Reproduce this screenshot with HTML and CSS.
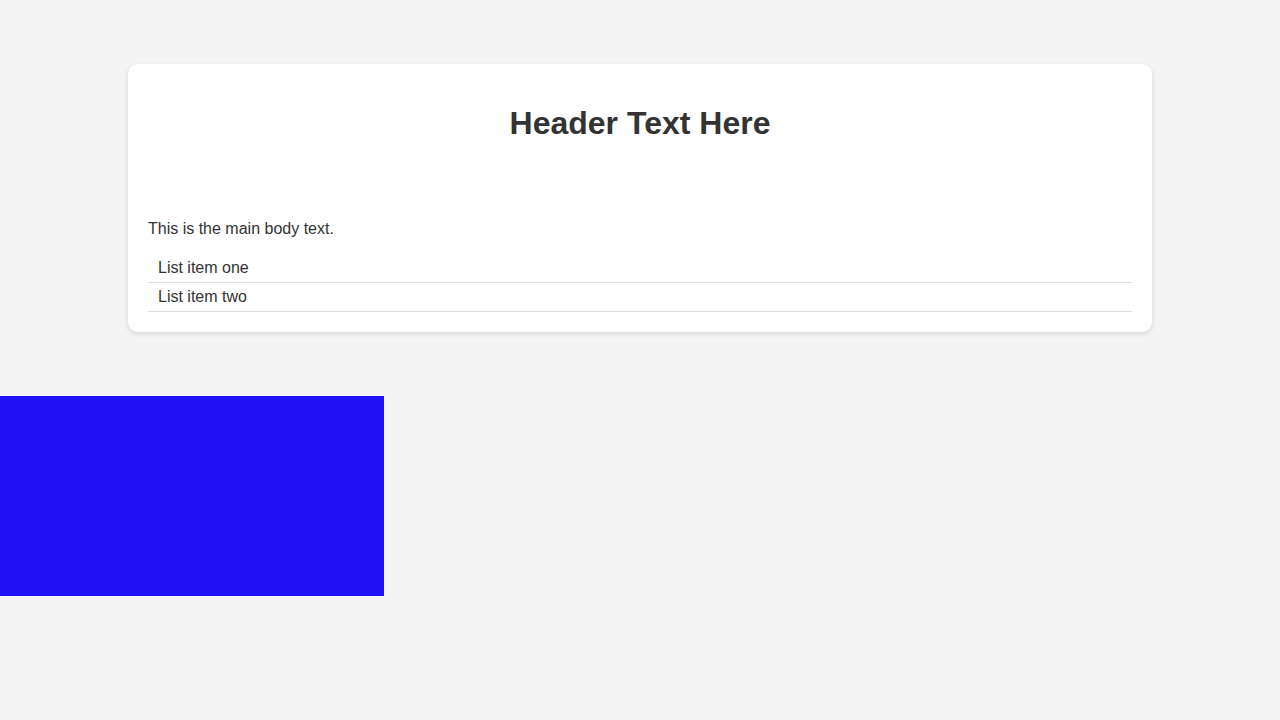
FILE: index.html
```html
<!DOCTYPE html>
<html>
<head>
<meta charset="utf-8">
<link rel="stylesheet" href="styles.css">
</head>
<body>
<div class="container">
  <div class="card">
    <div class="card-header">
      <h1 class="title">Header Text Here</h1>
    </div>
    <div class="card-body">
      <p class="body-text">This is the main body text.</p>
      <ul class="list">
        <li class="list-item">List item one</li>
        <li class="list-item">List item two</li>
      </ul>
    </div>
  </div>
</div>
<div class="blue-box"></div>
</body>
</html>
```

FILE: styles.css
```css
html, body {
  margin: 0;
  padding: 0;
}
body {
  background: #f4f4f4;
  font-family: "Liberation Sans", Arial, sans-serif;
  color: #333333;
  font-size: 16px;
}
.container {
  max-width: 1024px;
  margin: 0 auto;
  padding: 64px 0;
}
.card {
  background: #ffffff;
  border-radius: 10px;
  box-shadow: 0 2px 5px rgba(0, 0, 0, 0.12);
}
.card-header {
  padding: 20px;
  text-align: center;
}
.title {
  font-size: 32px;
  font-weight: bold;
  margin: 21.44px 0;
  color: #333333;
}
.card-body {
  padding: 20px;
}
.body-text {
  margin: 16px 0;
}
.list {
  list-style: none;
  margin: 0;
  padding: 0;
}
.list-item {
  padding: 5px 10px;
  border-bottom: 1px solid #dddddd;
}
.blue-box {
  width: 30%;
  height: 200px;
  background: #1f10f5;
}
```
